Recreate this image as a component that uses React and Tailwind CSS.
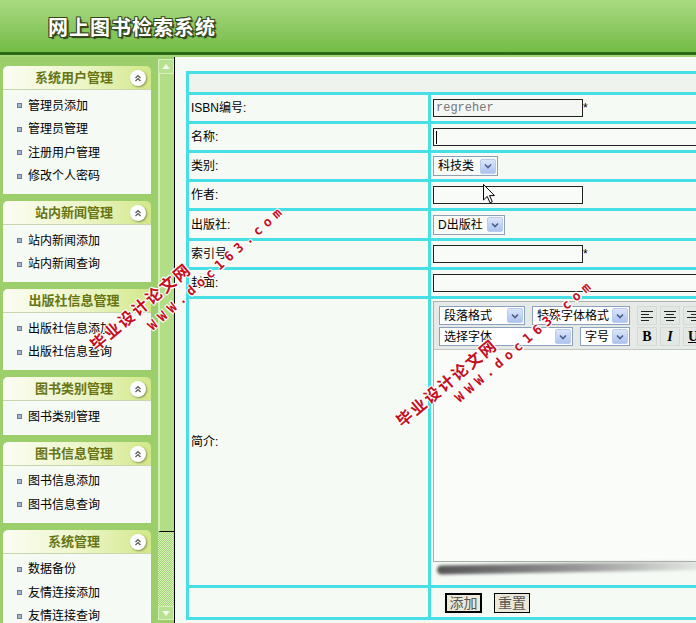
import React from "react";

const menus = [
  { title: "系统用户管理", items: ["管理员添加", "管理员管理", "注册用户管理", "修改个人密码"], icon: true },
  { title: "站内新闻管理", items: ["站内新闻添加", "站内新闻查询"], icon: true },
  { title: "出版社信息管理", items: ["出版社信息添加", "出版社信息查询"], icon: false },
  { title: "图书类别管理", items: ["图书类别管理"], icon: true },
  { title: "图书信息管理", items: ["图书信息添加", "图书信息查询"], icon: true },
  { title: "系统管理", items: ["数据备份", "友情连接添加", "友情连接查询"], icon: true },
];

function CollapseIcon() {
  return (
    <span className="absolute right-[5px] top-[4px] w-[16px] h-[16px] rounded-full bg-white shadow-[1px_1px_2px_rgba(80,90,40,0.6)] flex items-center justify-center">
      <svg width="8" height="8" viewBox="0 0 8 8" fill="none" stroke="#555" strokeWidth="1.2">
        <path d="M1.5 4 L4 1.5 L6.5 4" />
        <path d="M1.5 7 L4 4.5 L6.5 7" />
      </svg>
    </span>
  );
}

function MenuPanel({ title, items, icon }) {
  return (
    <div className="w-[148px] shrink-0">
      <div className="relative h-[24px] rounded-t-[5px] bg-gradient-to-r from-[#fbfdf2] via-[#eef6cc] to-[#d2e888] border-b border-[#c8d6ae] flex items-center justify-center pr-[6px]">
        <span className="text-[13px] font-bold text-[#677514] leading-none">{title}</span>
        {icon && <CollapseIcon />}
      </div>
      <div className="bg-[#f6faf5] pt-[4px] pb-[6px]">
        {items.map((it) => (
          <div key={it} className="h-[23.5px] flex items-center pl-[14px] text-[12px] text-black">
            <span className="w-[5px] h-[5px] bg-[#a9b6cc] border border-[#6a7a98] shrink-0" />
            <span className="ml-[6px] leading-none">{it}</span>
          </div>
        ))}
      </div>
    </div>
  );
}

function Label({ children, h }) {
  return (
    <div className={`${h} bg-[#f5faf5] flex items-center pl-[2px] text-[12px] text-black`}>
      {children}
    </div>
  );
}

function Cell({ children, h }) {
  return <div className={`${h} bg-[#f5faf5] flex items-center pl-[2px] text-[12px]`}>{children}</div>;
}

function DropBtn() {
  return (
    <span className="w-[16px] h-[15px] rounded-[2px] bg-gradient-to-b from-[#dbe6fb] to-[#adc3ef] border border-[#b9cbef] flex items-center justify-center shrink-0">
      <svg width="8" height="6" viewBox="0 0 8 6" fill="none" stroke="#4b5f86" strokeWidth="1.6">
        <path d="M1 1.5 L4 4.5 L7 1.5" />
      </svg>
    </span>
  );
}

function Select({ w, children }) {
  return (
    <div className={`${w} h-[20px] bg-[#f8fbf8] border border-[#8f9fb6] flex items-center justify-between pl-[4px] pr-[1px] text-[12px]`}>
      <span className="leading-none">{children}</span>
      <DropBtn />
    </div>
  );
}

function EdSelect({ w, children }) {
  return (
    <div className={`${w} h-full bg-white border border-[#8aa0bc] flex items-center justify-between pl-[4px] pr-[1px] text-[12px]`}>
      <span className="leading-none">{children}</span>
      <DropBtn />
    </div>
  );
}

function AlignBtn({ kind }) {
  const rows = kind === "left" ? [[2, 14], [2, 10], [2, 14], [2, 10]] : kind === "center" ? [[2, 14], [4, 12], [2, 14], [4, 12]] : [[2, 14], [6, 14], [2, 14], [6, 14]];
  return (
    <span className="w-[20px] h-full bg-[#e4e8e4] border border-[#d6dad6] flex items-center justify-center">
      <svg width="16" height="12" viewBox="0 0 16 12" stroke="#222" strokeWidth="1">
        {rows.map(([a, b], i) => (
          <line key={i} x1={a} x2={b} y1={1.5 + i * 3} y2={1.5 + i * 3} />
        ))}
      </svg>
    </span>
  );
}

function FmtBtn({ children, cls }) {
  return (
    <span className={`w-[20px] h-full bg-[#e4e8e4] border border-[#d6dad6] flex items-center justify-center text-[14px] text-black [font-family:'Liberation_Serif',serif] ${cls}`}>
      {children}
    </span>
  );
}

export default function App() {
  return (
    <div className="relative w-[696px] h-[623px] overflow-hidden bg-[#9ccf6c] [font-family:'Liberation_Sans','Noto_Sans_CJK_SC',sans-serif]">
      {/* top banner */}
      <div className="h-[52px] bg-gradient-to-b from-[#a9d981] to-[#74bc46] flex items-center pl-[48px] pt-[3px]">
        <span className="text-[20px] font-bold text-white tracking-[1px] [text-shadow:1px_1px_0_#34481e,-1px_-1px_0_#34481e,1px_-1px_0_#34481e,-1px_1px_0_#34481e,2px_2px_1px_#2a3a18]">
          网上图书检索系统
        </span>
      </div>
      <div className="h-[3px] bg-[#2f6a17]" />
      <div className="h-[2px] bg-[#a3d679]" />

      <div className="flex h-[566px]">
        {/* left menu */}
        <div className="w-[158px] shrink-0 bg-[#9ccf6c] pl-[3px] pt-[9px] flex flex-col gap-[7px] overflow-hidden">
          {menus.map((m) => (
            <MenuPanel key={m.title} {...m} />
          ))}
        </div>

        {/* scroll bar */}
        <div className="w-[17px] shrink-0 flex flex-col bg-[#9ccf6c] border-r border-black">
          <div className="h-[2px]" />
          <div className="h-[15px] bg-[#b6e190] border border-[#d6f1bf] flex items-center justify-center">
            <svg width="8" height="5" viewBox="0 0 8 5"><path d="M0 5 L4 0 L8 5 Z" fill="#f4fbe9" /></svg>
          </div>
          <div className="h-[458px] bg-[#b2de88] border-l-2 border-[#d2efb4] border-b border-b-black" />
          <div className="flex-1 bg-[repeating-conic-gradient(#a3d679_0_25%,#d6efb8_0_50%)] bg-[length:2px_2px]" />
          <div className="h-[14px] bg-[#b6e190] border border-[#d6f1bf] flex items-center justify-center">
            <svg width="8" height="5" viewBox="0 0 8 5"><path d="M0 0 L8 0 L4 5 Z" fill="#f4fbe9" /></svg>
          </div>
          <div className="h-[3px]" />
        </div>

        {/* content */}
        <div className="flex-1 bg-[#f5faf5] pl-[11px] pt-[14px] overflow-hidden">
          <div className="w-[560px] bg-[#45dfe5] p-[3px] grid grid-cols-[239px_1fr] gap-[3px]">
            <div className="col-span-2 h-[18px] bg-[#eef3ee]" />

            <Label h="h-[26px]">ISBN编号:</Label>
            <Cell h="h-[26px]">
              <div className="w-[150px] h-[18px] border border-[#222] bg-[#f3f6f3] flex items-center px-[2px] text-[12px] text-[#777] [font-family:'Liberation_Mono',monospace]">
                regreher
              </div>
              <span className="text-black">*</span>
            </Cell>

            <Label h="h-[26px]">名称:</Label>
            <Cell h="h-[26px]">
              <div className="w-[300px] h-[18px] border border-[#222] bg-[#f8fbf8] flex items-center pl-[2px]">
                <span className="w-px h-[13px] bg-black" />
              </div>
            </Cell>

            <Label h="h-[26px]">类别:</Label>
            <Cell h="h-[26px]">
              <Select w="w-[65px]">科技类</Select>
            </Cell>

            <Label h="h-[26px]">作者:</Label>
            <Cell h="h-[26px]">
              <div className="w-[150px] h-[18px] border border-[#222] bg-[#f8fbf8]" />
            </Cell>

            <Label h="h-[27px]">出版社:</Label>
            <Cell h="h-[27px]">
              <Select w="w-[72px]">D出版社</Select>
            </Cell>

            <Label h="h-[26px]">索引号:</Label>
            <Cell h="h-[26px]">
              <div className="w-[150px] h-[18px] border border-[#222] bg-[#f8fbf8]" />
              <span className="text-black">*</span>
            </Cell>

            <Label h="h-[26px]">封面:</Label>
            <Cell h="h-[26px]">
              <div className="w-[300px] h-[18px] border border-[#222] bg-[#f8fbf8]" />
            </Cell>

            <Label h="h-[286px]">简介:</Label>
            <div className="h-[286px] bg-[#f5faf5] pl-[2px] pt-[2px] flex flex-col">
              <div className="w-[300px] border border-[#aab0aa]">
                <div className="h-[48px] bg-[#e6eae6] border-b border-[#c4c8c4] pt-[4px] pl-[5px] flex flex-col gap-[2px]">
                  <div className="h-[19px] flex gap-[7px]">
                    <EdSelect w="w-[86px]">段落格式</EdSelect>
                    <EdSelect w="w-[98px]">特殊字体格式</EdSelect>
                    <div className="flex gap-[3px]">
                      <AlignBtn kind="left" />
                      <AlignBtn kind="center" />
                      <AlignBtn kind="right" />
                    </div>
                  </div>
                  <div className="h-[19px] flex gap-[7px]">
                    <EdSelect w="w-[134px]">选择字体</EdSelect>
                    <EdSelect w="w-[50px]">字号</EdSelect>
                    <div className="flex gap-[3px]">
                      <FmtBtn cls="font-bold">B</FmtBtn>
                      <FmtBtn cls="italic font-bold">I</FmtBtn>
                      <FmtBtn cls="underline font-bold">U</FmtBtn>
                    </div>
                  </div>
                </div>
                <div className="h-[211px] bg-[#f9fcf9]" />
              </div>
              <div className="ml-[4px] mt-[1px] w-[290px] h-[9px] rounded-l-full bg-gradient-to-r from-[#555] via-[#999] to-transparent blur-[1.5px] -rotate-1" />
            </div>

            <div className="h-[29px] bg-[#f5faf5]" />
            <div className="h-[29px] bg-[#f5faf5] flex items-center pl-[14px] gap-[12px]">
              <button className="w-[37px] h-[20px] border-2 border-black bg-[#ece9d8] text-[14px] leading-none text-[#555]">添加</button>
              <button className="w-[36px] h-[20px] border border-black bg-[#ece9d8] text-[14px] leading-none text-[#555]">重置</button>
            </div>
          </div>
        </div>
      </div>

      {/* mouse pointer */}
      <svg className="absolute left-[483px] top-[184px]" width="13" height="20" viewBox="0 0 13 20">
        <path d="M0.5 0.5 L0.5 16 L4.2 12.4 L7 18.8 L9.3 17.8 L6.6 11.6 L11.5 11.6 Z" fill="white" stroke="black" strokeWidth="1" />
      </svg>

      {/* watermarks */}
      <div className="absolute left-[93px] top-[336px] origin-left -rotate-[40deg] whitespace-nowrap text-[16px] font-bold tracking-[2px] text-[#c4101e] [text-shadow:1px_1px_0_#fff,-1px_-1px_0_#fff,1px_-1px_0_#fff,-1px_1px_0_#fff]">
        毕业设计论文网
      </div>
      <div className="absolute left-[150px] top-[318px] origin-left -rotate-[42deg] whitespace-nowrap text-[13px] font-bold tracking-[5px] text-[#c4101e] [font-family:'DejaVu_Sans_Mono',monospace] [text-shadow:1px_1px_0_#fff,-1px_-1px_0_#fff,1px_-1px_0_#fff,-1px_1px_0_#fff]">
        WWW.doc163.com
      </div>
      <div className="absolute left-[399px] top-[412px] origin-left -rotate-[40deg] whitespace-nowrap text-[16px] font-bold tracking-[2px] text-[#c4101e] [text-shadow:1px_1px_0_#fff,-1px_-1px_0_#fff,1px_-1px_0_#fff,-1px_1px_0_#fff]">
        毕业设计论文网
      </div>
      <div className="absolute left-[457px] top-[390px] origin-left -rotate-[41deg] whitespace-nowrap text-[13px] font-bold tracking-[5px] text-[#c4101e] [font-family:'DejaVu_Sans_Mono',monospace] [text-shadow:1px_1px_0_#fff,-1px_-1px_0_#fff,1px_-1px_0_#fff,-1px_1px_0_#fff]">
        WWW.doc163.com
      </div>
    </div>
  );
}
